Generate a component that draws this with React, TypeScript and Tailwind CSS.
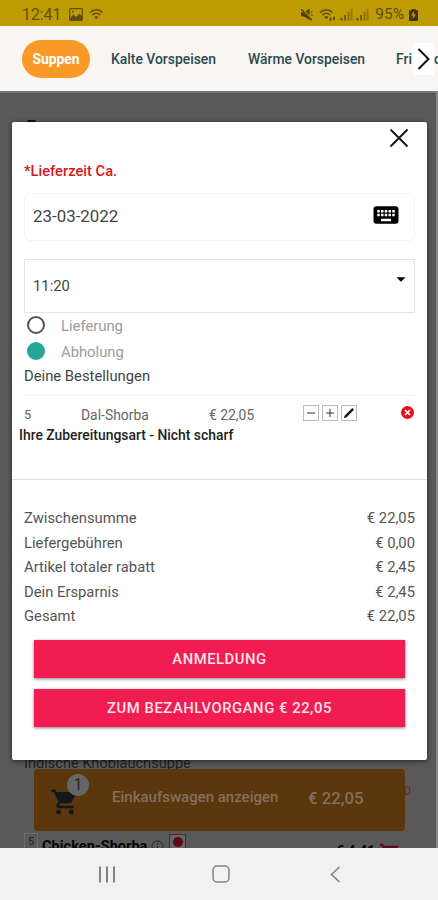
import React, { useState } from 'react';
import { MdKeyboard, MdShoppingCart, MdArrowDropDown } from 'react-icons/md';

const totals = [
  { label: 'Zwischensumme', value: '€ 22,05' },
  { label: 'Liefergebühren', value: '€ 0,00' },
  { label: 'Artikel totaler rabatt', value: '€ 2,45' },
  { label: 'Dein Ersparnis', value: '€ 2,45' },
  { label: 'Gesamt', value: '€ 22,05' },
];

function SignalIcon() {
  return (
    <svg width="13" height="13" viewBox="0 0 13 13" fill="#5e4d0b">
      <rect x="0.5" y="10" width="2" height="2.5" />
      <rect x="4" y="7" width="2" height="5.5" opacity="0.8" />
      <rect x="7.5" y="4" width="2" height="8.5" opacity="0.55" />
      <rect x="10.5" y="1" width="2" height="11.5" opacity="0.5" />
    </svg>
  );
}

function WifiIcon({ data = false }: { data?: boolean }) {
  return (
    <svg width="17" height="13" viewBox="0 0 17 13" fill="none" stroke="#5e4d0b" strokeWidth="1.5">
      <path d="M1 4.6C4.5 .8 10 .8 13.5 4.6M3.3 7C5.6 4.7 9 4.7 11.2 7" />
      <path d="M5.2 8.9 7.25 11.3 9.3 8.9C8 7.8 6.5 7.8 5.2 8.9Z" fill="#5e4d0b" stroke="none" />
      {data && <path d="M11.5 9.5V13M15 8.5V12" strokeWidth="1.8" />}
    </svg>
  );
}

function StatusBar() {
  return (
    <div className="h-[26px] shrink-0 bg-[#bf9c04] flex items-center pl-[22px] pr-5 pt-[3px] text-[#5e4d0b]">
      <span className="w-[40px] text-[15.8px] leading-none">12:41</span>
      <svg className="ml-[7px]" width="14" height="13" viewBox="0 0 14 13" fill="none" stroke="#5e4d0b">
        <rect x="0.7" y="0.7" width="12.6" height="11.6" rx="1" strokeWidth="1.2" />
        <path d="M1 10 4.5 6.5 7 9 10.5 5.5 13 8V12H1Z" fill="#5e4d0b" stroke="none" />
        <circle cx="4" cy="3.8" r="1" fill="#5e4d0b" stroke="none" />
      </svg>
      <div className="ml-1.5"><WifiIcon /></div>
      <div className="ml-auto flex items-center">
        <svg className="mr-[6px]" width="12" height="13" viewBox="0 0 12 13" fill="#4d3f08">
          <path d="M0 4.3h3L8.5.5V12L3 8.5H0Z" />
          <path d="m.8.8 10.4 11.4" stroke="#bf9c04" strokeWidth="2.4" />
          <path d="m.3 1.3 10.4 11" stroke="#4d3f08" strokeWidth="1.4" />
          <path d="m9.5 4.5 2-1M9.8 7h2" stroke="#4d3f08" />
        </svg>
        <WifiIcon data />
        <div className="ml-1 flex gap-[3px]">
          <SignalIcon />
          <SignalIcon />
        </div>
        <span className="ml-1.5 text-[15.5px] leading-none">95%</span>
        <svg className="ml-[5px]" width="9" height="12" viewBox="0 0 9 12" fill="#40340a">
          <path d="M2.5 0h4v1.2H9V12H0V1.2h2.5Z" />
          <path d="M5 2 2 6.5h2L3.6 10 7 5.5H4.8Z" fill="#bf9c04" />
        </svg>
      </div>
    </div>
  );
}

function CategoryTabs() {
  return (
    <div className="h-[65px] shrink-0 bg-[#f8f5f2] flex items-center overflow-hidden whitespace-nowrap text-[13.9px] font-medium text-[#2d4a50] pl-[22px]">
      <button className="h-[38px] w-[68px] shrink-0 rounded-full bg-[#f99a28] pt-0.5 text-white font-bold text-[13.9px]">Suppen</button>
      <span className="ml-[21px] w-[137px] shrink-0 pt-0.5">Kalte Vorspeisen</span>
      <span className="w-[148px] shrink-0 pt-0.5">Wärme Vorspeisen</span>
      <span className="w-[17px] shrink-0 pt-0.5">Fri</span>
      <div className="w-[21px] h-[32px] shrink-0 bg-white flex items-center justify-center">
        <svg width="14" height="22" viewBox="0 0 14 22" fill="none" stroke="#111" strokeWidth="2">
          <path d="M1.5 1 11.5 11 1.5 21" />
        </svg>
      </div>
      <span className="pt-0.5">c</span>
    </div>
  );
}

function MenuPage() {
  return (
    <div className="h-full bg-[#595959] border-t-2 border-t-[#777] border-r-2 border-r-[#8a8a8a] flex flex-col overflow-hidden">
      <div className="ml-[27px] mt-[27px] h-[2px] w-[9px] shrink-0 rounded-t bg-[#111]" />
      <div className="mt-auto relative h-[16px] shrink-0 pl-6 pt-[4px] text-[14.6px] leading-[14px] text-[#222]">
        Indische Knoblauchsuppe
        <div className="absolute left-[370px] -top-[30px] size-[38px] rounded-full bg-[#5d0819]" />
      </div>
      <div className="ml-[34px] h-[62px] w-[371px] shrink-0 rounded bg-[#5b370d] flex items-center relative mt-px">
        <MdShoppingCart size={30} className="ml-4 mt-1 text-[#12171a]" />
        <span className="absolute left-[33px] top-[5px] size-[22px] rounded-full bg-[#666] text-[#262626] text-[16px] flex items-center justify-center">1</span>
        <span className="ml-8 w-[196px] -mt-1.5 text-[15px] font-medium text-[#81705b]">Einkaufswagen anzeigen</span>
        <span className="text-[16.8px] font-medium -mt-0.5 text-[#81705b]">€ 22,05</span>
        <span className="absolute left-[371px] top-[12px] w-[6px] h-5 flex justify-end overflow-hidden text-[13px] leading-5 text-[#7a1f30]">0</span>
      </div>
      <div className="h-[17px] shrink-0 pl-6 pr-[35px] flex items-start overflow-hidden text-[#050505]">
        <div className="mt-[2px] w-[14px] h-[18px] shrink-0 border border-[#6b6b6b] text-[11px] leading-[15px] text-center text-[#222]">5</div>
        <span className="ml-1 mt-[6px] text-[14.6px] leading-[18px] font-bold">Chicken-Shorba</span>
        <svg className="ml-1 mt-[9px] shrink-0" width="13" height="13" viewBox="0 0 13 13" fill="none" stroke="#222">
          <circle cx="6.5" cy="6.5" r="5.5" />
          <path d="M6.5 6v4M6.5 3.2v1.3" />
        </svg>
        <div className="ml-[5px] mt-[3px] size-[17px] shrink-0 border border-[#5d2029] bg-[#666] pt-[2px] flex justify-center">
          <div className="size-[10px] rounded-full bg-[#5d0819]" />
        </div>
        <span className="ml-auto mt-[11px] text-[14px] leading-[18px] font-bold">€ 4,41</span>
        <MdShoppingCart size={22} className="ml-1 mt-[11px] shrink-0 text-[#5d0819]" />
      </div>
    </div>
  );
}

function OptionRow({ label, checked, onClick }: { label: string; checked: boolean; onClick: () => void }) {
  return (
    <button onClick={onClick} className="h-[26px] w-full pl-[15px] flex items-center text-[14.8px] text-[#9c9c9c]">
      <span className={checked ? 'size-[18px] rounded-full bg-[#26a69a]' : 'size-[18px] rounded-full border-2 border-[#555]'} />
      <span className="ml-4 pt-0.5">{label}</span>
    </button>
  );
}

function OrderDialog() {
  const [mode, setMode] = useState('Abholung');

  return (
    <div className="h-full w-full bg-white rounded-[2px] flex flex-col text-[#555] shadow-[0_1px_5px_rgba(0,0,0,0.6)]">
      <div className="h-[32px] shrink-0 flex justify-end pr-[18px] pt-1.5">
        <svg width="20" height="20" viewBox="0 0 20 20" fill="none" stroke="#111" strokeWidth="1.8">
          <path d="m1.5 1.5 17 17M18.5 1.5l-17 17" />
        </svg>
      </div>
      <div className="h-[39px] shrink-0 pl-3 pt-[7px] text-[14.7px] leading-5 font-medium text-[#d8161c]">*Lieferzeit Ca.</div>
      <div className="mx-3 h-[48px] shrink-0 rounded-md border border-[#f4f4f4] flex items-center justify-between pl-2 pr-[13px]">
        <span className="text-[16.9px] text-[#444]">23-03-2022</span>
        <MdKeyboard size={30} className="text-black -mt-1" />
      </div>
      <div className="mx-3 mt-[18px] h-[54px] shrink-0 border border-[#e4e4e4] flex justify-between pl-2 pr-0.5">
        <span className="mt-[16px] text-[14.8px] leading-5 text-[#444]">11:20</span>
        <MdArrowDropDown size={22} className="mt-2 text-black" />
      </div>
      <div className="-mt-px">
        <OptionRow label="Lieferung" checked={mode === 'Lieferung'} onClick={() => setMode('Lieferung')} />
        <OptionRow label="Abholung" checked={mode === 'Abholung'} onClick={() => setMode('Abholung')} />
      </div>
      <div className="mx-3 h-[32px] shrink-0 border-b border-[#f1f1f1] pt-0.5 text-[14.8px] leading-5 text-[#444]">Deine Bestellungen</div>
      <div className="mt-[6px] h-[22px] shrink-0 pl-3 pr-[13px] flex items-center text-[13.9px] text-[#666]">
        <span className="w-[57px] pt-1 text-[13px]">5</span>
        <span className="w-[128px] pt-1">Dal-Shorba</span>
        <span className="w-[94px] pt-1">€ 22,05</span>
        <div className="-mt-px flex gap-[3px]">
          <span className="size-4 border border-[#bbb] flex items-center justify-center">
            <svg width="10" height="10" viewBox="0 0 10 10" stroke="#333"><path d="M1 5h8" /></svg>
          </span>
          <span className="size-4 border border-[#bbb] flex items-center justify-center">
            <svg width="10" height="10" viewBox="0 0 10 10" stroke="#333"><path d="M1 5h8M5 1v8" /></svg>
          </span>
          <span className="size-4 border border-[#bbb] flex items-center justify-center">
            <svg width="12" height="12" viewBox="0 0 12 12" fill="#111"><path d="M1 11 1.6 8.8 9.3 1.1 11 2.7 3.3 10.4Z" /></svg>
          </span>
        </div>
        <svg className="ml-auto -mt-[2px]" width="13" height="13" viewBox="0 0 13 13">
          <circle cx="6.5" cy="6.5" r="6.5" fill="#e8101a" />
          <path d="m4 4 5 5M9 4 4 9" stroke="white" strokeWidth="1.7" />
        </svg>
      </div>
      <div className="h-[56px] shrink-0 border-b border-[#ddd] pl-[7px] pt-px text-[13.9px] leading-5 font-medium text-[#222]">Ihre Zubereitungsart - Nicht scharf</div>
      <div className="mt-[26px] px-3 text-[14.8px]">
        {totals.map((row) => (
          <div key={row.label} className="h-[24.5px] flex items-center justify-between">
            <span>{row.label}</span>
            <span>{row.value}</span>
          </div>
        ))}
      </div>
      <div className="mt-[11px] px-[22px] flex flex-col gap-[11px] text-[14.8px] font-medium text-[#ffe1e8]">
        <button className="h-[38px] pt-0.5 bg-[#f11c51] shadow-[0_1px_3px_rgba(0,0,0,0.5)] tracking-[0.55px]">ANMELDUNG</button>
        <button className="h-[38px] pt-0.5 bg-[#f11c51] shadow-[0_1px_3px_rgba(0,0,0,0.5)] tracking-[0.55px]">ZUM BEZAHLVORGANG € 22,05</button>
      </div>
    </div>
  );
}

function NavBar() {
  return (
    <div className="h-[52px] shrink-0 bg-[#f1f1f1] flex items-center text-[#828282]">
      <svg className="ml-[98px]" width="18" height="17" viewBox="0 0 18 17" fill="none" stroke="currentColor" strokeWidth="2">
        <path d="M2 .5v16M9 .5v16M16 .5v16" />
      </svg>
      <svg className="ml-[96px]" width="18" height="18" viewBox="0 0 18 18" fill="none" stroke="currentColor" strokeWidth="1.5">
        <rect x="1" y="1" width="16" height="16" rx="4" />
      </svg>
      <svg className="ml-[100px]" width="11" height="17" viewBox="0 0 11 17" fill="none" stroke="currentColor" strokeWidth="1.6">
        <path d="M9.5 1 1.5 8.5l8 7.5" />
      </svg>
    </div>
  );
}

export default function App() {
  return (
    <div className="w-[438px] h-[900px] flex flex-col overflow-hidden bg-white font-[Roboto,sans-serif]">
      <StatusBar />
      <CategoryTabs />
      <div className="relative h-[757px] shrink-0">
        <MenuPage />
        <div className="absolute left-3 top-[31px] w-[415px] h-[638px]">
          <OrderDialog />
        </div>
      </div>
      <NavBar />
    </div>
  );
}
